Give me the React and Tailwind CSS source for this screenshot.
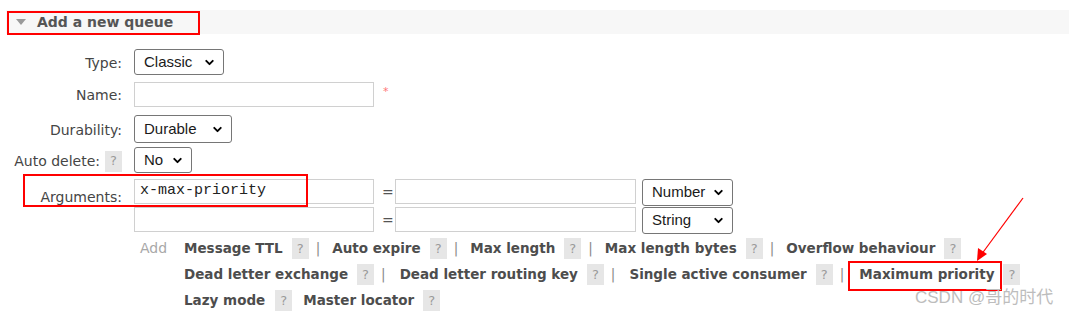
import { ChevronDown } from 'lucide-react'

function Select({ value, width }) {
    return (
        <div
            className={`flex h-full items-center justify-between rounded-[3px] border border-[#767676] bg-white pl-[9px] pr-[7px] font-['Liberation_Sans',Arial,sans-serif] text-[15px] text-[#1a1a1a] ${width}`}
        >
            <span>{value}</span>
            <ChevronDown className="h-[13px] w-[13px] text-black" strokeWidth={3.5} />
        </div>
    )
}

function Help({ className = '' }) {
    return (
        <span className={`inline-flex h-[21px] w-[17px] items-center justify-center bg-[#e6e6e6] text-[13px] font-normal text-[#9a9a9a] ${className}`}>
            ?
        </span>
    )
}

function Row({ label, help, className, children }) {
    return (
        <div className={`flex items-center ${className}`}>
            <div className="flex w-[122px] items-center justify-end pt-[2px]">
                <span>{label}</span>
                {help && <Help className="ml-[5px]" />}
            </div>
            <div className="ml-[12px] flex h-full items-center">{children}</div>
        </div>
    )
}

function Arg({ name, sep = true, wide = false }) {
    return (
        <span className="inline-flex items-center">
            <span>{name}</span>
            <Help className="ml-[9px]" />
            {sep && (
                <span className={`ml-[7px] font-normal text-[#888] ${wide ? 'mr-[14px]' : 'mr-[12px]'}`}>|</span>
            )}
        </span>
    )
}

export default function App() {
    return (
        <div className="relative h-[313px] w-[1069px] overflow-hidden bg-white font-['DejaVu_Sans',Verdana,sans-serif] text-[14px] text-[#454545]">
            {/* Section header */}
            <div className="ml-[6px] mt-[10px] flex h-[24px] items-center bg-[#f7f7f7]">
                <svg className="ml-[10px]" width="10" height="6" viewBox="0 0 10 6">
                    <path d="M0 0 L10 0 L5 6 Z" fill="#9a9a9a" />
                </svg>
                <span className="ml-[11px] font-bold text-[#555]">Add a new queue</span>
            </div>

            {/* Form */}
            <Row label="Type:" className="mt-[15px] h-[26px]">
                <Select value="Classic" width="w-[90px]" />
            </Row>
            <Row label="Name:" className="mt-[7px] h-[25px]">
                <div className="h-full w-[240px] border border-[#d0d0d0]" />
                <span className="ml-[9px] mt-[2px] self-start text-[11px] text-[#f77]">*</span>
            </Row>
            <Row label="Durability:" className="mt-[8px] h-[28px]">
                <Select value="Durable" width="w-[98px]" />
            </Row>
            <Row label="Auto delete:" help className="mt-[4px] h-[26px]">
                <Select value="No" width="w-[58px]" />
            </Row>

            <div className="mt-[6px] flex">
                <div className="flex w-[122px] justify-end pt-[8px]">Arguments:</div>
                <div className="ml-[12px] flex flex-col gap-[1px]">
                    <div className="flex items-start">
                        <div className="flex h-[25px] w-[240px] items-center border border-[#d0d0d0] pl-[5px] font-['Liberation_Mono',monospace] text-[15px] text-[#222]">
                            x-max-priority
                        </div>
                        <span className="mx-[8px] mt-[3px] w-[5px] text-[#555]">=</span>
                        <div className="h-[25px] w-[241px] border border-[#d0d0d0]" />
                        <div className="ml-[6px] h-[27px]">
                            <Select value="Number" width="w-[91px]" />
                        </div>
                    </div>
                    <div className="flex items-start">
                        <div className="h-[25px] w-[240px] border border-[#d0d0d0]" />
                        <span className="mx-[8px] mt-[3px] w-[5px] text-[#555]">=</span>
                        <div className="h-[25px] w-[241px] border border-[#d0d0d0]" />
                        <div className="ml-[6px] h-[27px]">
                            <Select value="String" width="w-[91px]" />
                        </div>
                    </div>
                </div>
            </div>

            {/* Argument shortcuts */}
            <div className="mt-[4px] flex">
                <span className="ml-[140px] w-[44px] text-[#a8a8a8]">Add</span>
                <div className="flex flex-col gap-[5px] text-[13.5px] font-bold text-[#4d4d4d]">
                    <div className="flex items-center">
                        <Arg name="Message TTL" />
                        <Arg name="Auto expire" />
                        <Arg name="Max length" />
                        <Arg name="Max length bytes" />
                        <Arg name="Overflow behaviour" sep={false} />
                    </div>
                    <div className="flex items-center">
                        <Arg name="Dead letter exchange" wide />
                        <Arg name="Dead letter routing key" wide />
                        <Arg name="Single active consumer" wide />
                        <span className="inline-flex items-center">
                            <span className="ml-[1px]">Maximum priority</span>
                            <Help className="ml-[9px]" />
                        </span>
                    </div>
                    <div className="flex items-center">
                        <span>Lazy mode</span>
                        <Help className="ml-[10px]" />
                        <span className="ml-[11px]">Master locator</span>
                        <Help className="ml-[9px]" />
                    </div>
                </div>
            </div>

            {/* Annotations */}
            <div className="absolute left-[7px] top-[11px] h-[24px] w-[193px] border-2 border-[#f00]" />
            <div className="absolute left-[23px] top-[174px] h-[33px] w-[285px] border-2 border-[#f00]" />
            <div className="absolute left-[848px] top-[261px] h-[30px] w-[154px] border-2 border-[#f00]" />
            <svg className="absolute left-0 top-0" width="1069" height="313">
                <line x1="1023" y1="198" x2="981" y2="255" stroke="#f00" strokeWidth="1.2" />
                <path d="M977 261 L978 248 L987 254 Z" fill="#f00" />
            </svg>
            <div className="absolute left-[915px] top-[285px] font-['Liberation_Sans','Noto_Sans_CJK_SC',sans-serif] text-[17px] text-[#bdbdbd]">
                CSDN @哥的时代
            </div>
        </div>
    )
}
